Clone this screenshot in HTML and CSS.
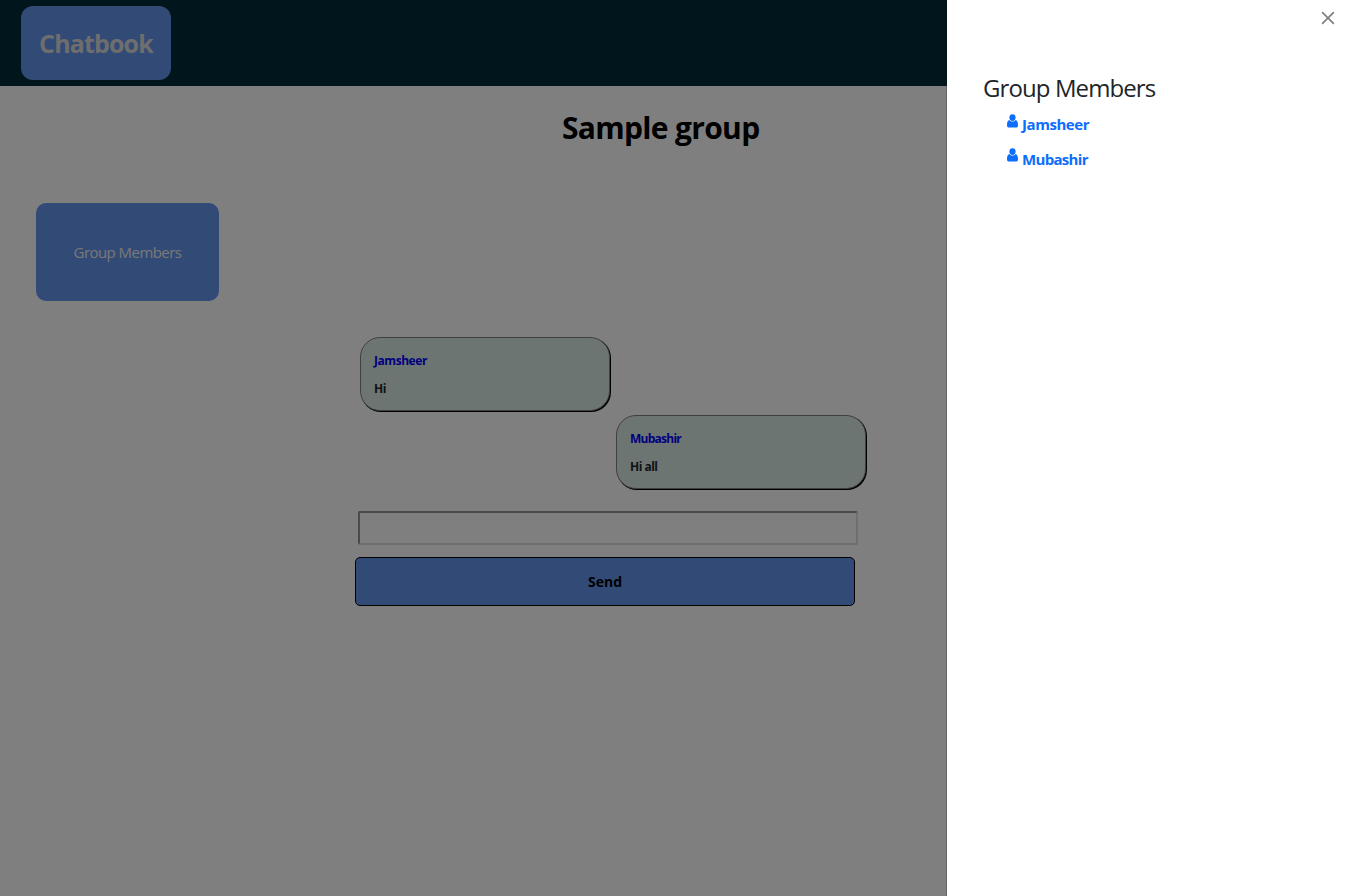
FILE: index.html
```html
<!DOCTYPE html>
<html lang="en">
<head>
<meta charset="utf-8">
<title>Chatbook</title>
<link rel="stylesheet" href="styles.css">
</head>
<body>
<header class="navbar"><a class="brand"><span>Chatbook</span></a></header>
<main class="page">
  <h1 class="title">Sample group</h1>
  <button class="members-button"><span>Group Members</span></button>
  <section class="chat">
    <article class="message"><p class="author jam">Jamsheer</p><p class="text">Hi</p></article>
    <article class="message own"><p class="author mub">Mubashir</p><p class="text">Hi all</p></article>
  </section>
  <form class="composer">
    <input class="field" type="text" aria-label="Message">
    <button class="send" type="button"><span>Send</span></button>
  </form>
</main>
<div class="backdrop"></div>
<aside class="drawer">
  <div class="drawer-header">
    <svg class="close" viewBox="0 0 16 16"><path d="M2.6 2.6 13.4 13.4M13.4 2.6 2.6 13.4"/></svg>
  </div>
  <h2 class="drawer-title">Group Members</h2>
  <ul class="members">
    <li class="member"><svg class="user" viewBox="0 0 11 14"><ellipse cx="5.5" cy="3.6" rx="3.1" ry="3.4"/><path d="M2.5 6.1C.8 6.6 0 8.3 0 10.9 0 12.7.7 13.5 2 13.5h7c1.3 0 2-.8 2-2.6 0-2.6-.8-4.3-2.5-4.8C7.8 7.1 6.8 7.6 5.5 7.6S3.2 7.1 2.5 6.1Z"/></svg><span class="name-jam">Jamsheer</span></li>
    <li class="member last"><svg class="user" viewBox="0 0 11 14"><ellipse cx="5.5" cy="3.6" rx="3.1" ry="3.4"/><path d="M2.5 6.1C.8 6.6 0 8.3 0 10.9 0 12.7.7 13.5 2 13.5h7c1.3 0 2-.8 2-2.6 0-2.6-.8-4.3-2.5-4.8C7.8 7.1 6.8 7.6 5.5 7.6S3.2 7.1 2.5 6.1Z"/></svg><span class="name-mub">Mubashir</span></li>
  </ul>
</aside>
</body>
</html>
```
FILE: styles.css
```css
* { box-sizing: border-box; }
body { margin: 0; height: 896px; overflow: hidden; background: #fff; color: #212529; font-family: "Open Sans", "Noto Sans", sans-serif; }
h1, h2, p, ul { margin: 0; padding: 0; }
span, p { white-space: nowrap; }
.navbar { height: 86px; padding: 6px 21px; background: #002b38; }
.brand { display: flex; width: 150px; height: 74px; align-items: center; justify-content: center; border-radius: 12px; background: cornflowerblue; color: #dcdcdc; font-size: 25px; font-weight: 700; letter-spacing: -.85px; }
.title { margin: 20px 0 0 562px; color: #000; font-size: 30px; line-height: 44px; font-weight: 700; letter-spacing: -.68px; }
.members-button { display: block; width: 183px; height: 98px; margin: 53px 0 0 36px; border: 0; border-radius: 10px; background: cornflowerblue; color: #f0f0f0; font: 15px "Open Sans", sans-serif; letter-spacing: -.55px; }
.chat { width: 507px; margin: 36px 0 0 360px; display: flex; flex-direction: column; gap: 4px; }
.message { width: 250px; height: 74px; padding: 14px 13px; border: 1px solid #808080; border-radius: 20px; background: #d8eae4; box-shadow: 1px 1px #000; font-size: 12px; line-height: 18px; font-weight: 700; }
.own { align-self: flex-end; margin-right: 1px; }
.author { color: #00f; margin-bottom: 10px; }
.jam { letter-spacing: -.45px; }
.mub { letter-spacing: -.75px; }
.text { letter-spacing: -.5px; }
.composer { display: flex; flex-direction: column; width: 503px; margin: 22px 0 0 355px; gap: 12px; }
.field { width: 500px; height: 34px; margin-left: 3px; border: 2px solid; border-color: #969696 #dedede #dedede #969696; border-radius: 2px; }
.send { width: 500px; height: 49px; border: 1px solid #000; border-radius: 5px; background: cornflowerblue; color: #000; font: 700 14px "Open Sans", sans-serif; }
.backdrop { position: fixed; inset: 0; background: rgba(0, 0, 0, .5); }
.drawer { position: fixed; top: 0; right: 0; bottom: 0; width: 400px; border-left: 1px solid rgba(0, 0, 0, .2); background: #fff; background-clip: padding-box; }
.drawer-header { display: flex; justify-content: flex-end; height: 70px; padding: 10px 10px 0 0; }
.close { width: 16px; height: 16px; fill: none; stroke: #7f7f7f; stroke-width: 1.7; stroke-linecap: round; }
.drawer-title { margin-left: 36px; font-size: 24px; line-height: 35px; font-weight: 400; letter-spacing: -.9px; }
.members { list-style: none; margin: 1px 0 0 60px; }
.member { display: flex; align-items: flex-start; gap: 4px; height: 35px; color: #0d6efd; font-size: 15px; line-height: 36px; font-weight: 700; }
.user { width: 11px; height: 14px; margin-top: 8px; fill: #0d6efd; }
.last .user { margin-top: 7px; }
.name-jam { letter-spacing: -.45px; }
.name-mub { letter-spacing: -.68px; }
```
